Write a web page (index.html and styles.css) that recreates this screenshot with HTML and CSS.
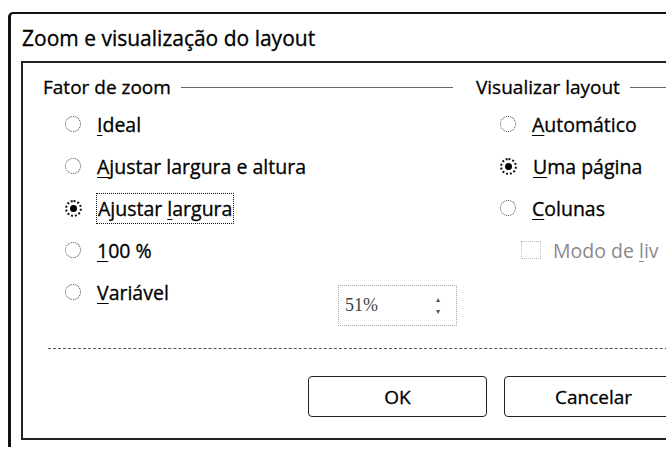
FILE: index.html
```html
<!DOCTYPE html>
<html lang="pt">
<head>
    <meta charset="UTF-8">
    <title>Zoom e visualização do layout</title>
    <link rel="stylesheet" href="styles.css">
</head>
<body>

    <div class="dialog">
        <div class="title">Zoom e visualização do layout</div>

        <div class="panel">
            <div class="groups">
                <!-- Fator de zoom -->
                <div class="group zoom-group">
                    <div class="group-head">
                        <span>Fator de zoom</span>
                        <span class="rule"></span>
                    </div>
                    <div class="row">
                        <span class="radio"></span>
                        <span class="label"><u>I</u>deal</span>
                    </div>
                    <div class="row">
                        <span class="radio"></span>
                        <span class="label"><u>A</u>justar largura e altura</span>
                    </div>
                    <div class="row">
                        <span class="radio checked"></span>
                        <span class="label focused">Ajustar <u>l</u>argura</span>
                    </div>
                    <div class="row">
                        <span class="radio"></span>
                        <span class="label"><u>1</u>00 %</span>
                    </div>
                    <div class="row">
                        <span class="radio"></span>
                        <span class="label"><u>V</u>ariável</span>
                        <div class="spinbox">
                            <span>51%</span>
                            <span class="spin">
                                <span>&#9652;</span>
                                <span>&#9662;</span>
                            </span>
                        </div>
                    </div>
                </div>

                <!-- Visualizar layout -->
                <div class="group layout-group">
                    <div class="group-head">
                        <span>Visualizar layout</span>
                        <span class="rule"></span>
                    </div>
                    <div class="row">
                        <span class="radio"></span>
                        <span class="label"><u>A</u>utomático</span>
                    </div>
                    <div class="row">
                        <span class="radio checked"></span>
                        <span class="label"><u>U</u>ma página</span>
                    </div>
                    <div class="row">
                        <span class="radio"></span>
                        <span class="label"><u>C</u>olunas</span>
                    </div>
                    <div class="row sub-row">
                        <span class="checkbox"></span>
                        <span class="label disabled">Modo de <u>l</u>iv</span>
                    </div>
                </div>
            </div>

            <div class="separator"></div>

            <div class="buttons">
                <button class="btn">OK</button>
                <button class="btn">Cancelar</button>
            </div>
        </div>
    </div>

</body>
</html>
```

FILE: styles.css
```css
html, body {
    margin: 0;
    padding: 0;
    background: #fff;
    overflow: hidden;
}

body {
    font-family: "Open Sans", "Noto Sans", Arial, sans-serif;
    color: #000;
    -webkit-text-stroke: 0.3px #000;
}

.dialog {
    margin: 12px 0 0 8px;
    width: 720px;
    height: 435px;
    border-top: 2px solid #111;
    border-left: 3px solid #111;
    border-top-left-radius: 5px;
    box-sizing: border-box;
}

.title {
    height: 47px;
    padding-left: 11px;
    display: flex;
    align-items: center;
    font-size: 21px;
}

.panel {
    margin-left: 10px;
    height: 379px;
    box-sizing: border-box;
    border-top: 2px solid #222;
    border-left: 2px solid #222;
    border-bottom: 2px solid #222;
}

.groups {
    display: flex;
    height: 282px;
    padding-left: 20px;
    padding-top: 10px;
    box-sizing: border-box;
}

.group-head {
    display: flex;
    align-items: center;
    height: 28px;
    margin-bottom: 2px;
    font-size: 19px;
}

.group-head .rule {
    flex: 1 0 30px;
    margin-left: 10px;
    height: 0;
    border-top: 1px solid #666;
}

.zoom-group {
    width: 433px;
    flex-shrink: 0;
}

.zoom-group .group-head {
    margin-right: 23px;
}

.layout-group {
    flex: 1;
}

.row {
    display: flex;
    align-items: center;
    height: 42px;
    font-size: 19.5px;
    position: relative;
}

.zoom-group .row {
    padding-left: 22px;
}

.layout-group .row {
    padding-left: 24px;
}

.radio {
    width: 14px;
    height: 14px;
    border: 1px dotted #444;
    border-radius: 50%;
    margin-right: 16px;
    display: flex;
    align-items: center;
    justify-content: center;
    flex-shrink: 0;
}

.radio.checked {
    border: 2px dotted #111;
    width: 13px;
    height: 13px;
}

.radio.checked::after {
    content: "";
    width: 7px;
    height: 7px;
    border-radius: 50%;
    background: #000;
}

.label u {
    text-decoration-thickness: 1px;
    text-underline-offset: 3px;
}

.label.focused {
    outline: 1px dotted #111;
    outline-offset: 1px;
}

.label.disabled {
    color: #8a8a8a;
    -webkit-text-stroke: 0;
}

.sub-row {
    padding-left: 45px !important;
}

.checkbox {
    width: 18px;
    height: 16px;
    border: 1px dotted #bbb;
    margin-right: 12px;
    flex-shrink: 0;
}

.spinbox {
    position: absolute;
    left: 295px;
    top: 14px;
    width: 119px;
    height: 41px;
    box-sizing: border-box;
    border: 1px dotted #aaa;
    display: flex;
    align-items: center;
    justify-content: space-between;
    padding: 0 16px 0 6px;
    font-family: "Liberation Serif", serif;
    font-size: 18px;
    color: #444;
    -webkit-text-stroke: 0;
}

.spin {
    display: flex;
    flex-direction: column;
    font-size: 8px;
    line-height: 12px;
    color: #555;
}

.separator {
    margin: 3px 0 0 25px;
    border-top: 1px dashed #555;
}

.buttons {
    display: flex;
    gap: 17px;
    margin-top: 27px;
    padding-left: 285px;
}

.btn {
    width: 179px;
    height: 41px;
    flex-shrink: 0;
    background: #fff;
    border: 1px solid #222;
    border-radius: 4px;
    font-family: "Open Sans", "Noto Sans", Arial, sans-serif;
    font-size: 19px;
    color: #000;
    -webkit-text-stroke: 0.3px #000;
}
```
